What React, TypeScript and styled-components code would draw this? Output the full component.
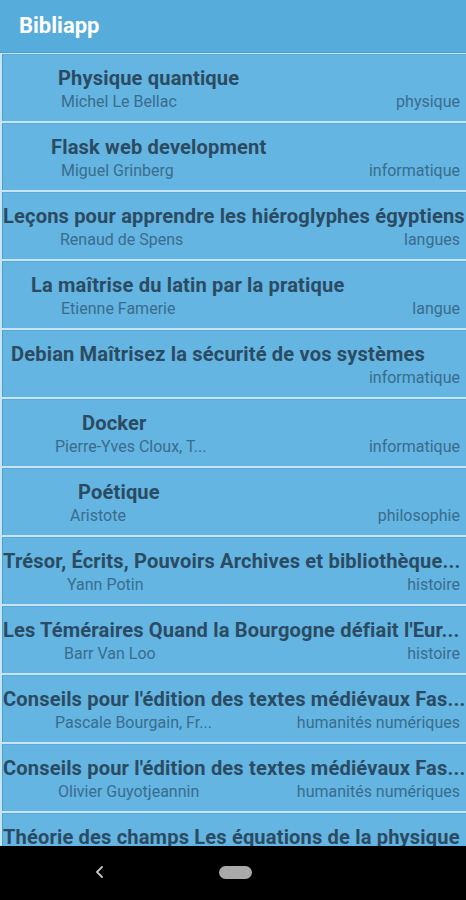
import React from 'react';
import styled, { createGlobalStyle } from 'styled-components';

// --- Données ---
type Book = {
  title: string;
  author?: string;
  category?: string;
  titleIndent: number;
  authorIndent: number;
};

const books: Book[] = [
  { title: 'Physique quantique', author: 'Michel Le Bellac', category: 'physique', titleIndent: 58, authorIndent: 61 },
  { title: 'Flask web development', author: 'Miguel Grinberg', category: 'informatique', titleIndent: 51, authorIndent: 61 },
  { title: 'Leçons pour apprendre les hiéroglyphes égyptiens', author: 'Renaud de Spens', category: 'langues', titleIndent: 2, authorIndent: 60 },
  { title: 'La maîtrise du latin par la pratique', author: 'Etienne Famerie', category: 'langue', titleIndent: 31, authorIndent: 61 },
  { title: 'Debian Maîtrisez la sécurité de vos systèmes', category: 'informatique', titleIndent: 11, authorIndent: 60 },
  { title: 'Docker', author: 'Pierre-Yves Cloux, T...', category: 'informatique', titleIndent: 82, authorIndent: 55 },
  { title: 'Poétique', author: 'Aristote', category: 'philosophie', titleIndent: 78, authorIndent: 70 },
  { title: 'Trésor, Écrits, Pouvoirs Archives et bibliothèque...', author: 'Yann Potin', category: 'histoire', titleIndent: 2, authorIndent: 67 },
  { title: "Les Téméraires Quand la Bourgogne défiait l'Eur...", author: 'Barr Van Loo', category: 'histoire', titleIndent: 2, authorIndent: 64 },
  { title: "Conseils pour l'édition des textes médiévaux Fas...", author: 'Pascale Bourgain, Fr...', category: 'humanités numériques', titleIndent: 2, authorIndent: 55 },
  { title: "Conseils pour l'édition des textes médiévaux Fas...", author: 'Olivier Guyotjeannin', category: 'humanités numériques', titleIndent: 2, authorIndent: 58 },
  { title: 'Théorie des champs Les équations de la physique', titleIndent: 2, authorIndent: 60 },
];

// --- Styles ---
const GlobalStyle = createGlobalStyle`
  html, body {
    margin: 0;
    padding: 0;
    background: #000;
  }
  body {
    font-family: Roboto, "Liberation Sans", sans-serif;
  }
`;

const Screen = styled.div`
  width: 466px;
  height: 900px;
  display: flex;
  flex-direction: column;
  overflow: hidden;
  background: #c6e5f6;
`;

const AppBar = styled.header`
  flex: 0 0 52px;
  display: flex;
  align-items: center;
  padding: 0 19px 2px;
  box-sizing: border-box;
  background-color: #56acda;
  color: #fff;
  font-size: 22px;
  font-weight: 700;
  box-shadow: 0 1px 0 #4a9ccb;
`;

const List = styled.div`
  flex: 1;
  display: flex;
  flex-direction: column;
  gap: 2px;
  padding-top: 2px;
  overflow: hidden;
`;

const Card = styled.div`
  flex: 0 0 67px;
  display: flex;
  flex-direction: column;
  margin-left: 2px;
  padding-top: 11px;
  background-color: #64b5e1;
  border-left: 1px solid #4d9fcc;
  border-top: 1px solid #5aa9d6;
  box-sizing: border-box;
`;

const Title = styled.div<{ $indent: number }>`
  padding-left: ${(p) => p.$indent - 3}px;
  font-size: 20.1px;
  font-weight: 700;
  letter-spacing: 0.15px;
  line-height: 25px;
  color: #2b4b63;
  white-space: nowrap;
  overflow: hidden;
`;

const Meta = styled.div`
  display: flex;
  align-items: baseline;
  justify-content: space-between;
  height: 22px;
  padding-right: 6px;
`;

const Author = styled.span<{ $indent: number }>`
  margin-left: ${(p) => p.$indent - 3}px;
  font-size: 16px;
  line-height: 22px;
  color: #3a6c8e;
  white-space: nowrap;
`;

const Category = styled.span`
  margin-left: auto;
  font-size: 16px;
  line-height: 22px;
  color: #3a6c8e;
  white-space: nowrap;
`;

const NavBar = styled.nav`
  flex: 0 0 54px;
  background: #000;
  position: relative;
`;

const BackButton = styled.div`
  position: absolute;
  left: 93px;
  top: 17px;
  width: 14px;
  height: 18px;
`;

const HomePill = styled.div`
  position: absolute;
  left: 219px;
  top: 20px;
  width: 33px;
  height: 13px;
  border-radius: 7px;
  background: #a9a9a9;
`;

const BookCard: React.FC<{ book: Book }> = ({ book }) => (
  <Card>
    <Title $indent={book.titleIndent}>{book.title}</Title>
    {(book.author || book.category) && (
      <Meta>
        {book.author ? <Author $indent={book.authorIndent}>{book.author}</Author> : <span />}
        {book.category && <Category>{book.category}</Category>}
      </Meta>
    )}
  </Card>
);

const App: React.FC = () => {
  return (
    <>
      <GlobalStyle />
      <Screen>
        <AppBar>Bibliapp</AppBar>
        <List>
          {books.map((b, i) => (
            <BookCard key={i} book={b} />
          ))}
        </List>
        <NavBar>
          <BackButton>
            <svg width="14" height="18" viewBox="0 0 14 18">
              <path d="M9 4 L4 9 L9 14" fill="none" stroke="#bdbdbd" strokeWidth="2" strokeLinecap="round" strokeLinejoin="round" />
            </svg>
          </BackButton>
          <HomePill />
        </NavBar>
      </Screen>
    </>
  );
};

export default App;
